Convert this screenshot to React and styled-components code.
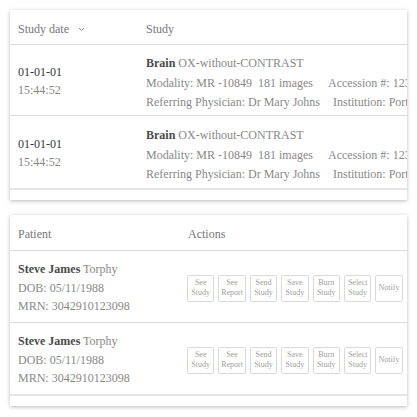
import React from "react";
import styled, { createGlobalStyle } from "styled-components";

const Global = createGlobalStyle`
  html, body { margin: 0; padding: 0; background: #fff; }
  body { font-family: "Liberation Serif", "Times New Roman", serif; }
`;

const Page = styled.div`
  width: 417px;
  height: 417px;
  box-sizing: border-box;
  padding: 10px 10px 0 10px;
  display: flex;
  flex-direction: column;
  gap: 15px;
`;

const Card = styled.div`
  background: #fff;
  box-shadow: 0 1px 4px rgba(0, 0, 0, 0.28);
  overflow: hidden;
  padding-bottom: ${(p) => p.$pb}px;
`;

const Row = styled.div`
  display: grid;
  grid-template-columns: ${(p) => p.$cols};
  align-items: center;
  height: ${(p) => p.$h}px;
  border-bottom: ${(p) => (p.$thick ? "2px solid #e6e6e6" : "1px solid #dcdcdc")};
  white-space: nowrap;
`;

const HeadCell = styled.div`
  padding-left: ${(p) => (p.$pl ?? 8)}px;
  padding-top: 4px;
  font-size: 12px;
  color: #777;
  display: flex;
  align-items: center;
  gap: 9px;
`;

const Cell = styled.div`
  padding-left: 8px;
  margin-top: ${(p) => p.$mt || 0}px;
  font-size: 12px;
  line-height: ${(p) => p.$lh || 18}px;
  color: #888;
  min-width: 0;
`;

const Dark = styled.span`
  color: ${(p) => (p.$bold ? "#4a4a4a" : "#333")};
  font-weight: ${(p) => (p.$bold ? 700 : 400)};
`;

const Line = styled.div`
  display: flex;
`;

const Item = styled.span`
  margin-right: ${(p) => p.$mr || 0}px;
`;

const Actions = styled.div`
  display: flex;
  gap: 4px;
  margin-top: 3px;
`;

const ActionBtn = styled.div`
  width: 27.4px;
  height: 27px;
  flex: none;
  box-sizing: border-box;
  border: 1px solid #dadada;
  border-radius: 2px;
  display: flex;
  align-items: center;
  justify-content: center;
  text-align: center;
  font-size: 8px;
  line-height: 10px;
  color: #a0a0a0;
  white-space: normal;
`;

const Chevron = () => (
  <svg width="7" height="5" viewBox="0 0 7 5">
    <path d="M1 1l2.5 2.5L6 1" fill="none" stroke="#888" strokeWidth="1" />
  </svg>
);

const studyCols = "128px 1fr";
const patientCols = "177px 1fr";

const StudyRow = ({ h, last }) => (
  <Row $cols={studyCols} $h={h} $thick={last}>
    <Cell $lh={18} $mt={2}>
      <div><Dark>01-01-01</Dark></div>
      <div>15:44:52</div>
    </Cell>
    <Cell $lh={19.5} $mt={7}>
      <div>
        <Dark $bold>Brain</Dark> OX-without-CONTRAST
      </div>
      <Line>
        <Item $mr={6}>Modality: MR -10849</Item>
        <Item $mr={15}>181 images</Item>
        <Item>Accession #: 12345</Item>
      </Line>
      <Line>
        <Item $mr={13}>Referring Physician: Dr Mary Johns</Item>
        <Item>Institution: Portland</Item>
      </Line>
    </Cell>
  </Row>
);

const actions = [
  ["See", "Study"],
  ["See", "Report"],
  ["Send", "Study"],
  ["Save", "Study"],
  ["Burn", "Study"],
  ["Select", "Study"],
  ["Notify"],
];

const PatientRow = ({ h, last }) => (
  <Row $cols={patientCols} $h={h} $thick={last}>
    <Cell $lh={18.5} $mt={3}>
      <div>
        <Dark $bold>Steve James</Dark> Torphy
      </div>
      <div>DOB: 05/11/1988</div>
      <div>MRN: 3042910123098</div>
    </Cell>
    <Actions>
      {actions.map((a, i) => (
        <ActionBtn key={i}>
          {a.map((t, j) => (
            <React.Fragment key={j}>
              {t}
              {j < a.length - 1 && <br />}
            </React.Fragment>
          ))}
        </ActionBtn>
      ))}
    </Actions>
  </Row>
);

export default function App() {
  return (
    <>
      <Global />
      <Page>
        <Card $pb={10}>
          <Row $cols={studyCols} $h={34}>
            <HeadCell>
              Study date <Chevron />
            </HeadCell>
            <HeadCell>Study</HeadCell>
          </Row>
          <StudyRow h={70} />
          <StudyRow h={72} last />
        </Card>
        <Card $pb={10}>
          <Row $cols={patientCols} $h={35}>
            <HeadCell>Patient</HeadCell>
            <HeadCell $pl={1}>Actions</HeadCell>
          </Row>
          <PatientRow h={71} />
          <PatientRow h={71} last />
        </Card>
      </Page>
    </>
  );
}
